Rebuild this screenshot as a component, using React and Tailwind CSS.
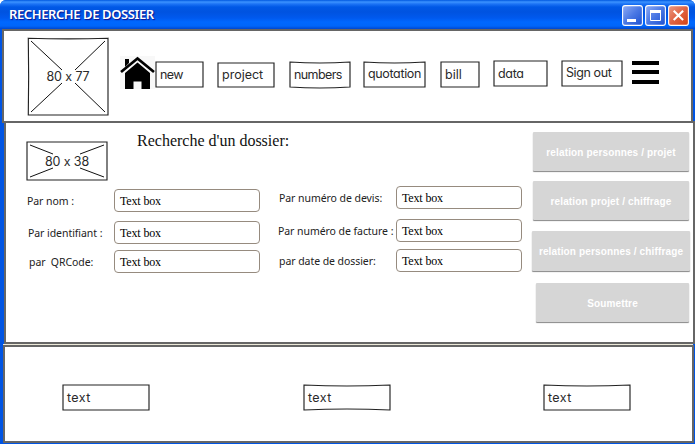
const HAND = "font-['Inter'] [font-feature-settings:'cv11'] text-[12.5px] leading-[16px] text-[#2a2a2a] whitespace-pre";

function SketchBox({ w, h, top = 0, bottom = 0, className = "", textClass = "", children }) {
  return (
    <div className={`grid shrink-0 ${className}`}>
      <svg width={w} height={h} className="col-start-1 row-start-1 block overflow-visible" fill="none" stroke="#222" strokeWidth="1.15">
        <path d={`M1 1Q${w / 2} ${1 + top * 2} ${w - 1} 1V${h - 1}Q${w / 2} ${h - 1 + bottom * 2} 1 ${h - 1}Z`} />
      </svg>
      <span className={`col-start-1 row-start-1 ${HAND} ${textClass}`}>{children}</span>
    </div>
  );
}

function Placeholder({ w, h, label, className, labelClass = "", children }) {
  return (
    <div className={`grid shrink-0 ${className}`}>
      <svg width={w} height={h} className="col-start-1 row-start-1 block" fill="none" stroke="#222" strokeWidth="1.15">
        {children}
      </svg>
      <span className={`col-start-1 row-start-1 self-center justify-self-center font-['Inter'] text-[12.5px] leading-[16px] tracking-[-0.1px] text-[#2a2a2a] whitespace-pre ${labelClass}`}>{label}</span>
    </div>
  );
}

function Field({ label, labelClass, inputClass, className }) {
  return (
    <div className={`flex h-[23px] ${className}`}>
      <span className={`shrink-0 whitespace-pre font-['Noto_Sans'] text-[10.5px] leading-[24px] tracking-[-0.06px] text-[#222] ${labelClass}`}>{label}</span>
      <div className={`h-[23px] shrink-0 rounded-[4px] border border-[#968b7f] bg-white pl-[5px] font-['Liberation_Serif'] text-[12px] leading-[22px] tracking-[-0.15px] text-black ${inputClass}`}>Text box</div>
    </div>
  );
}

function GrayButton({ children, className }) {
  return (
    <div className={`flex items-center justify-center whitespace-pre rounded-[1px] bg-[#d6d6d6] pt-px font-['Liberation_Sans'] text-[10px] font-bold tracking-[0.14px] text-white shadow-[0_1px_1px_#888] ${className}`}>{children}</div>
  );
}

function WinButton({ red, children }) {
  return (
    <svg width="21" height="21" viewBox="0 0 21 21" className="block shrink-0">
      <defs>
        <linearGradient id={red ? "wr" : "wb"} x1="0" y1="0" x2="1" y2="1">
          <stop offset="0" stopColor={red ? "#eb9a83" : "#8fabf5"} />
          <stop offset=".5" stopColor={red ? "#e06343" : "#4a78e4"} />
          <stop offset="1" stopColor={red ? "#d5400f" : "#1c4fd0"} />
        </linearGradient>
      </defs>
      <rect x=".6" y=".6" width="19.8" height="19.8" rx="2.5" fill={red ? "url(#wr)" : "url(#wb)"} stroke="#fff" strokeWidth="1.1" />
      {children}
    </svg>
  );
}

export default function App() {
  return (
    <div className="flex h-[444px] w-[695px] flex-col overflow-hidden rounded-t-[6px] bg-[#0054e3]">
      <header className="flex h-[29px] shrink-0 justify-between bg-[linear-gradient(180deg,#0058e0_0px,#3c93ff_2px,#1c73f5_4px,#0058e6_7px,#0053e0_12px,#0059ee_18px,#0068ff_22px,#0066fa_26px,#0046cf_29px)] pl-[9px] pr-[6px]">
        <span className="mt-[5px] whitespace-pre font-['Noto_Sans'] text-[13px] font-semibold leading-[18px] tracking-[-0.4px] text-white [text-shadow:1px_1px_1px_#0f1089]">RECHERCHE DE DOSSIER</span>
        <div className="mt-[5px] flex gap-[2px]">
          <WinButton><path d="M5 14h9v3h-9z" fill="#fff" /></WinButton>
          <WinButton><path d="M5.5 6v9.500h10V6z" fill="none" stroke="#fff" /><path d="M5 5h11v3H5z" fill="#fff" /></WinButton>
          <WinButton red><path d="M5.700 5.700l9.400 9.400M15.100 5.700l-9.400 9.400" stroke="#fff" strokeWidth="2.1" /></WinButton>
        </div>
      </header>

      <nav className="ml-[2px] flex h-[92px] w-[691px] shrink-0 items-start border-x-2 border-t-2 border-[#666] bg-white">
        <Placeholder w={82} h={79} label="80 x 77" className="ml-[23px] mt-[6px]" labelClass="pt-px">
          <path d="M1.300 1.200Q41 2.500 81 1.200V78H1.300Q2 40 1.300 1.200Z" />
          <path d="M4 4L35 33M78 4L48 33M4 75L35 46M78 75L48 46" stroke="#111" strokeWidth="1" />
        </Placeholder>
        <svg width="35" height="34" viewBox="0 0 35 34" className="ml-[11px] mt-[25px] block shrink-0">
          <path d="M0 0h35v33H0z" fill="#f8f8f8" />
          <path d="M5 3h4v4l-4 4z" />
          <path d="M1 16L17.500 2.500L34 16" fill="none" stroke="#000" strokeWidth="2.7" />
          <path d="M5 17L17.500 6.500L30 17V33H21.500V25.500H13.500V33H5Z" />
        </svg>
        <SketchBox w={49} h={27} className="mt-[30px]" textClass="pl-[5px] pt-[6px] tracking-[-0.6px]">new</SketchBox>
        <SketchBox w={58} h={26} className="ml-[13px] mt-[31px]" textClass="pl-[5px] pt-[5px]">project</SketchBox>
        <SketchBox w={62} h={27} top={1} bottom={1} className="ml-[14px] mt-[30px]" textClass="pl-[5px] pt-[6px] tracking-[-0.6px]">numbers</SketchBox>
        <SketchBox w={63} h={27} top={1} className="ml-[12px] mt-[30px]" textClass="pl-[5px] pt-[5px] tracking-[-0.35px]">quotation</SketchBox>
        <SketchBox w={40} h={27} className="ml-[14px] mt-[30px]" textClass="pl-[5px] pt-[6px]">bill</SketchBox>
        <SketchBox w={55} h={27} className="ml-[13px] mt-[29px]" textClass="pl-[5px] pt-[6px] tracking-[-0.3px]">data</SketchBox>
        <SketchBox w={62} h={27} className="ml-[13px] mt-[29px]" textClass="pl-[5px] pt-[5px] tracking-[-0.4px]">Sign out</SketchBox>
        <div className="ml-[9px] mt-[30px] flex shrink-0 flex-col">
          <div className="h-[4px] w-[27px] bg-black" />
          <div className="mt-[5px] h-[4px] w-[27px] bg-black" />
          <div className="mt-[6px] h-[4px] w-[27px] bg-black" />
        </div>
      </nav>

      <div className="ml-[2px] h-[2px] w-[693px] shrink-0 bg-[#666]" />
      <main className="ml-[4px] flex h-[221px] w-[691px] shrink-0 border-x-2 border-b-2 border-[#666] bg-white">
        <div className="w-[521px] shrink-0">
          <div className="flex h-[58px]">
            <Placeholder w={82} h={40} label="80 x 38" className="ml-[20px] mt-[18px] h-[40px]" labelClass="pt-[2px]">
              <path d="M1 1H81V39H1Z" />
              <path d="M4 4L27 13M78 4L54 13M4 36L27 27M78 36L54 27" stroke="#111" strokeWidth="1" />
            </Placeholder>
            <h1 className="ml-[29px] mt-[8px] whitespace-pre font-['Liberation_Serif'] text-[16px] leading-[20px] text-[#111]">Recherche d'un dossier:</h1>
          </div>
          <div className="flex items-start">
            <div className="flex w-[272px] shrink-0 flex-col pt-[8px]">
              <Field label="Par nom :" labelClass="w-[87px]" inputClass="w-[146px]" className="ml-[21px]" />
              <Field label="Par identifiant :" labelClass="w-[86px]" inputClass="w-[146px]" className="ml-[22px] mt-[9px]" />
              <Field label="par  QRCode:" labelClass="w-[85px]" inputClass="w-[146px]" className="ml-[23px] mt-[6px]" />
            </div>
            <div className="flex flex-col pt-[5px]">
              <Field label="Par numéro de devis:" labelClass="w-[117px]" inputClass="w-[126px]" className="ml-[1px]" />
              <Field label="Par numéro de facture :" labelClass="w-[118px]" inputClass="w-[126px]" className="mt-[10px]" />
              <Field label="par date de dossier:" labelClass="w-[117px]" inputClass="w-[126px]" className="ml-[1px] mt-[7px]" />
            </div>
          </div>
        </div>
        <div className="flex flex-col pt-[9px]">
          <GrayButton className="ml-[6px] h-[39px] w-[156px]">relation personnes / projet</GrayButton>
          <GrayButton className="ml-[6px] mt-[10px] h-[39px] w-[156px]">relation projet / chiffrage</GrayButton>
          <GrayButton className="ml-[5px] mt-[11px] h-[40px] w-[158px]">relation personnes / chiffrage</GrayButton>
          <GrayButton className="ml-[9px] mt-[12px] h-[39px] w-[153px]">Soumettre</GrayButton>
        </div>
      </main>

      <div className="ml-[3px] h-px w-[690px] shrink-0 bg-[#ece9d8]" />
      <footer className="ml-[3px] flex h-[98px] w-[691px] shrink-0 items-start border-2 border-[#666] bg-white pt-[37px]">
        <SketchBox w={88} h={27} className="ml-[57px]" textClass="pl-[5px] pt-[6px] tracking-[0.4px]">text</SketchBox>
        <SketchBox w={88} h={27} top={1} bottom={-1} className="ml-[153px]" textClass="pl-[5px] pt-[6px] tracking-[0.4px]">text</SketchBox>
        <SketchBox w={88} h={27} top={1} className="ml-[152px]" textClass="pl-[5px] pt-[6px] tracking-[0.4px]">text</SketchBox>
      </footer>
    </div>
  );
}
